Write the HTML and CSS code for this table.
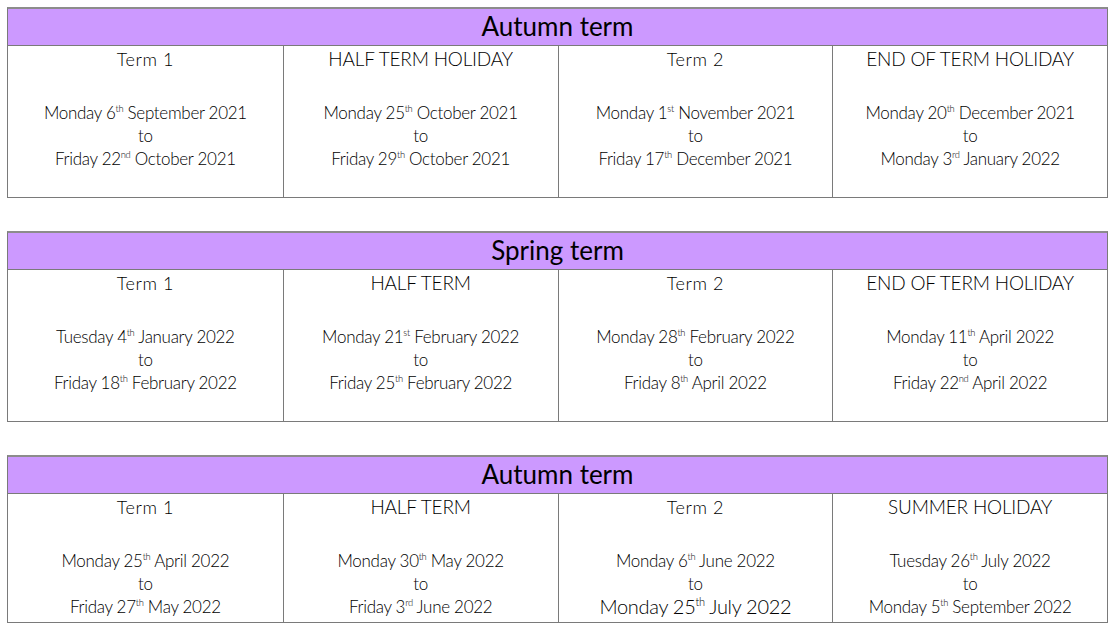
FILE: index.html
```html
<!DOCTYPE html>
<html lang="en">
<head>
<meta charset="utf-8">
<title>Term dates</title>
<link rel="stylesheet" href="styles.css">
</head>
<body>
<main class="page">
  <section class="term">
    <h2 class="term-title">Autumn term</h2>
    <div class="term-row">
      <div class="cell">
        <p class="cell-label hand">Term 1</p>
        <p class="dates">Monday 6<sup>th</sup> September 2021<br>to<br>Friday 22<sup>nd</sup> October 2021</p>
      </div>
      <div class="cell">
        <p class="cell-label caps">HALF TERM HOLIDAY</p>
        <p class="dates">Monday 25<sup>th</sup> October 2021<br>to<br>Friday 29<sup>th</sup> October 2021</p>
      </div>
      <div class="cell">
        <p class="cell-label hand">Term 2</p>
        <p class="dates">Monday 1<sup>st</sup> November 2021<br>to<br>Friday 17<sup>th</sup> December 2021</p>
      </div>
      <div class="cell">
        <p class="cell-label caps">END OF TERM HOLIDAY</p>
        <p class="dates">Monday 20<sup>th</sup> December 2021<br>to<br>Monday 3<sup>rd</sup> January 2022</p>
      </div>
    </div>
  </section>

  <section class="term">
    <h2 class="term-title">Spring term</h2>
    <div class="term-row">
      <div class="cell">
        <p class="cell-label hand">Term 1</p>
        <p class="dates">Tuesday 4<sup>th</sup> January 2022<br>to<br>Friday 18<sup>th</sup> February 2022</p>
      </div>
      <div class="cell">
        <p class="cell-label caps">HALF TERM</p>
        <p class="dates">Monday 21<sup>st</sup> February 2022<br>to<br>Friday 25<sup>th</sup> February 2022</p>
      </div>
      <div class="cell">
        <p class="cell-label hand">Term 2</p>
        <p class="dates">Monday 28<sup>th</sup> February 2022<br>to<br>Friday 8<sup>th</sup> April 2022</p>
      </div>
      <div class="cell">
        <p class="cell-label caps">END OF TERM HOLIDAY</p>
        <p class="dates">Monday 11<sup>th</sup> April 2022<br>to<br>Friday 22<sup>nd</sup> April 2022</p>
      </div>
    </div>
  </section>

  <section class="term term--last">
    <h2 class="term-title">Autumn term</h2>
    <div class="term-row">
      <div class="cell">
        <p class="cell-label hand">Term 1</p>
        <p class="dates">Monday 25<sup>th</sup> April 2022<br>to<br>Friday 27<sup>th</sup> May 2022</p>
      </div>
      <div class="cell">
        <p class="cell-label caps">HALF TERM</p>
        <p class="dates">Monday 30<sup>th</sup> May 2022<br>to<br>Friday 3<sup>rd</sup> June 2022</p>
      </div>
      <div class="cell">
        <p class="cell-label hand">Term 2</p>
        <p class="dates">Monday 6<sup>th</sup> June 2022<br>to<br><span class="big">Monday 25<sup>th</sup> July 2022</span></p>
      </div>
      <div class="cell">
        <p class="cell-label caps">SUMMER HOLIDAY</p>
        <p class="dates">Tuesday 26<sup>th</sup> July 2022<br>to<br>Monday 5<sup>th</sup> September 2022</p>
      </div>
    </div>
  </section>
</main>
</body>
</html>
```

FILE: styles.css
```css
* { box-sizing: border-box; }

body {
  margin: 0;
  background: #ffffff;
  color: #000000;
  font-family: "Lato", "Open Sans", sans-serif;
}

.page {
  padding: 7px 0 0 7px;
  width: 1114px;
  display: flex;
  flex-direction: column;
  gap: 33px;
}

.term {
  width: 1101px;
  border: 1px solid #7a7a7a;
  border-top: 2px solid #8c8c8c;
}

.term-title {
  margin: 0;
  height: 37px;
  background: #cc99ff;
  border-bottom: 1px solid #7a7a7a;
  text-align: center;
  font-family: "Lato", sans-serif;
  font-weight: 400;
  font-size: 26px;
  line-height: 35px;
  color: #000;
}

.term-row {
  display: grid;
  grid-template-columns: repeat(4, 1fr);
}

.cell {
  padding: 2px 4px 27px;
  text-align: center;
  border-left: 1px solid #7a7a7a;
}

.cell:first-child {
  border-left: none;
}

.term--last .cell {
  padding-bottom: 3px;
}

.cell-label {
  margin: 0;
  line-height: 22px;
  color: #000;
}

.cell-label.hand {
  font-family: "Lato", sans-serif;
  font-size: 18px;
  font-weight: 300;
  letter-spacing: 0.6px;
}

.cell-label.caps {
  font-family: "Lato", sans-serif;
  font-size: 19px;
  font-weight: 300;
  letter-spacing: -0.2px;
}

.dates {
  margin: 31px 0 0;
  font-family: "Lato", sans-serif;
  font-weight: 300;
  font-size: 17px;
  line-height: 23px;
  letter-spacing: -0.3px;
  color: #000;
}

.dates sup {
  font-size: 0.55em;
  line-height: 0;
  vertical-align: 0.7em;
}

.big {
  font-size: 20px;
}
```
